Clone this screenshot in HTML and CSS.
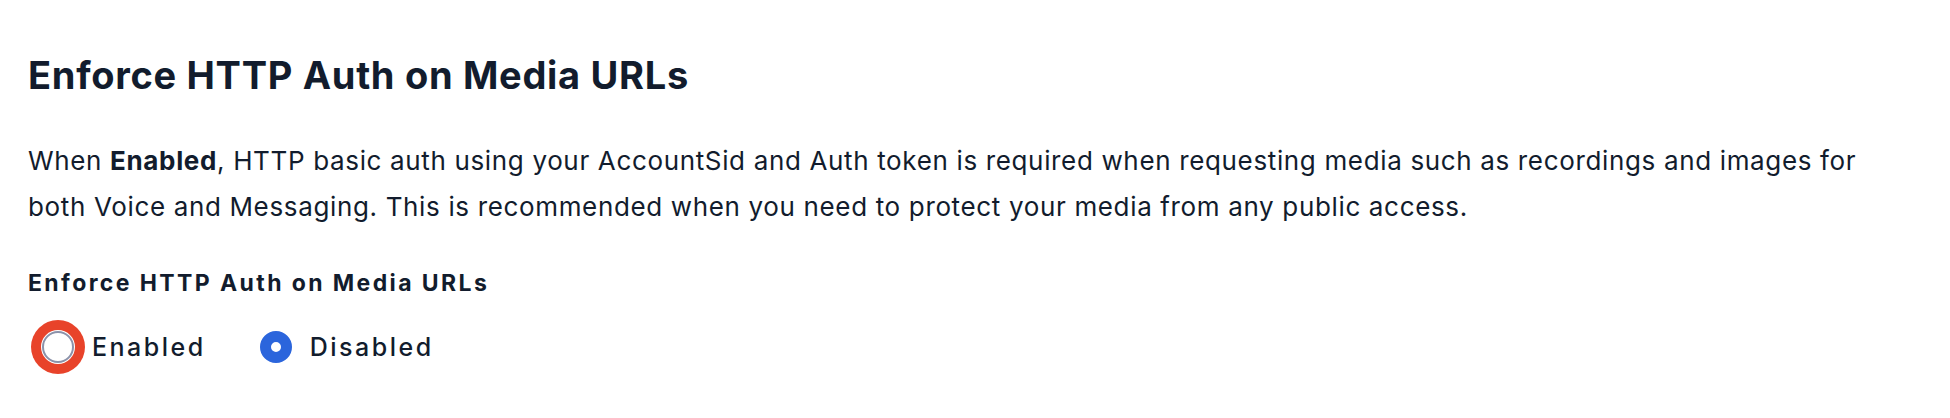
FILE: index.html
```html
<!DOCTYPE html>
<html lang="en">
<head>
<meta charset="utf-8">
<title>Enforce HTTP Auth on Media URLs</title>
<link rel="stylesheet" href="styles.css">
</head>
<body>
<main class="section">
  <h1 class="title">Enforce HTTP Auth on Media URLs</h1>
  <p class="desc">When <strong>Enabled</strong>, HTTP basic auth using your AccountSid and Auth token is required when requesting media such as recordings and images for both Voice and Messaging. This is recommended when you need to protect your media from any public access.</p>
  <div class="group" role="radiogroup" aria-labelledby="grp-label">
    <div class="legend" id="grp-label">Enforce HTTP Auth on Media URLs</div>
    <div class="options">
      <label class="option">
        <span class="radio radio-off highlight"></span>
        <span class="option-text">Enabled</span>
      </label>
      <label class="option option-second">
        <span class="radio radio-on"></span>
        <span class="option-text">Disabled</span>
      </label>
    </div>
  </div>
</main>
</body>
</html>
```
FILE: styles.css
```css
html, body {
  margin: 0;
  padding: 0;
  background: #ffffff;
}
body {
  font-family: Inter, "Noto Sans", sans-serif;
  color: #121c2d;
  min-height: 418px;
}
.section {
  box-sizing: border-box;
  padding: 52px 0 40px 28px;
  width: 1880px;
  min-height: 418px;
}
.title {
  margin: 0;
  font-size: 38px;
  line-height: 46px;
  font-weight: 700;
  letter-spacing: 0.7px;
}
.desc {
  margin: 40px 0 0 0;
  font-size: 26px;
  line-height: 46px;
  font-weight: 400;
  letter-spacing: 0.65px;
}
.desc strong {
  font-weight: 700;
}
.group {
  margin-top: 38px;
}
.legend {
  font-size: 23px;
  line-height: 30px;
  font-weight: 700;
  letter-spacing: 2.4px;
}
.options {
  display: flex;
  align-items: center;
  margin-top: 31px;
  height: 36px;
}
.option {
  display: flex;
  align-items: center;
  gap: 18px;
}
.option-second {
  margin-left: 54px;
  gap: 18px;
}
.option-text {
  font-size: 25px;
  line-height: 36px;
  letter-spacing: 2.5px;
  font-weight: 500;
}
.radio {
  box-sizing: border-box;
  width: 32px;
  height: 32px;
  border-radius: 50%;
  flex: none;
}
.radio-off {
  border: 2px solid #8b92aa;
  background: #ffffff;
}
.radio-on {
  border: 11px solid #2b65dc;
  background: #ffffff;
}
.highlight {
  margin-left: 14px;
  box-shadow: 0 0 0 1px #ffffff, 0 0 0 11px #e8432a;
}
```
